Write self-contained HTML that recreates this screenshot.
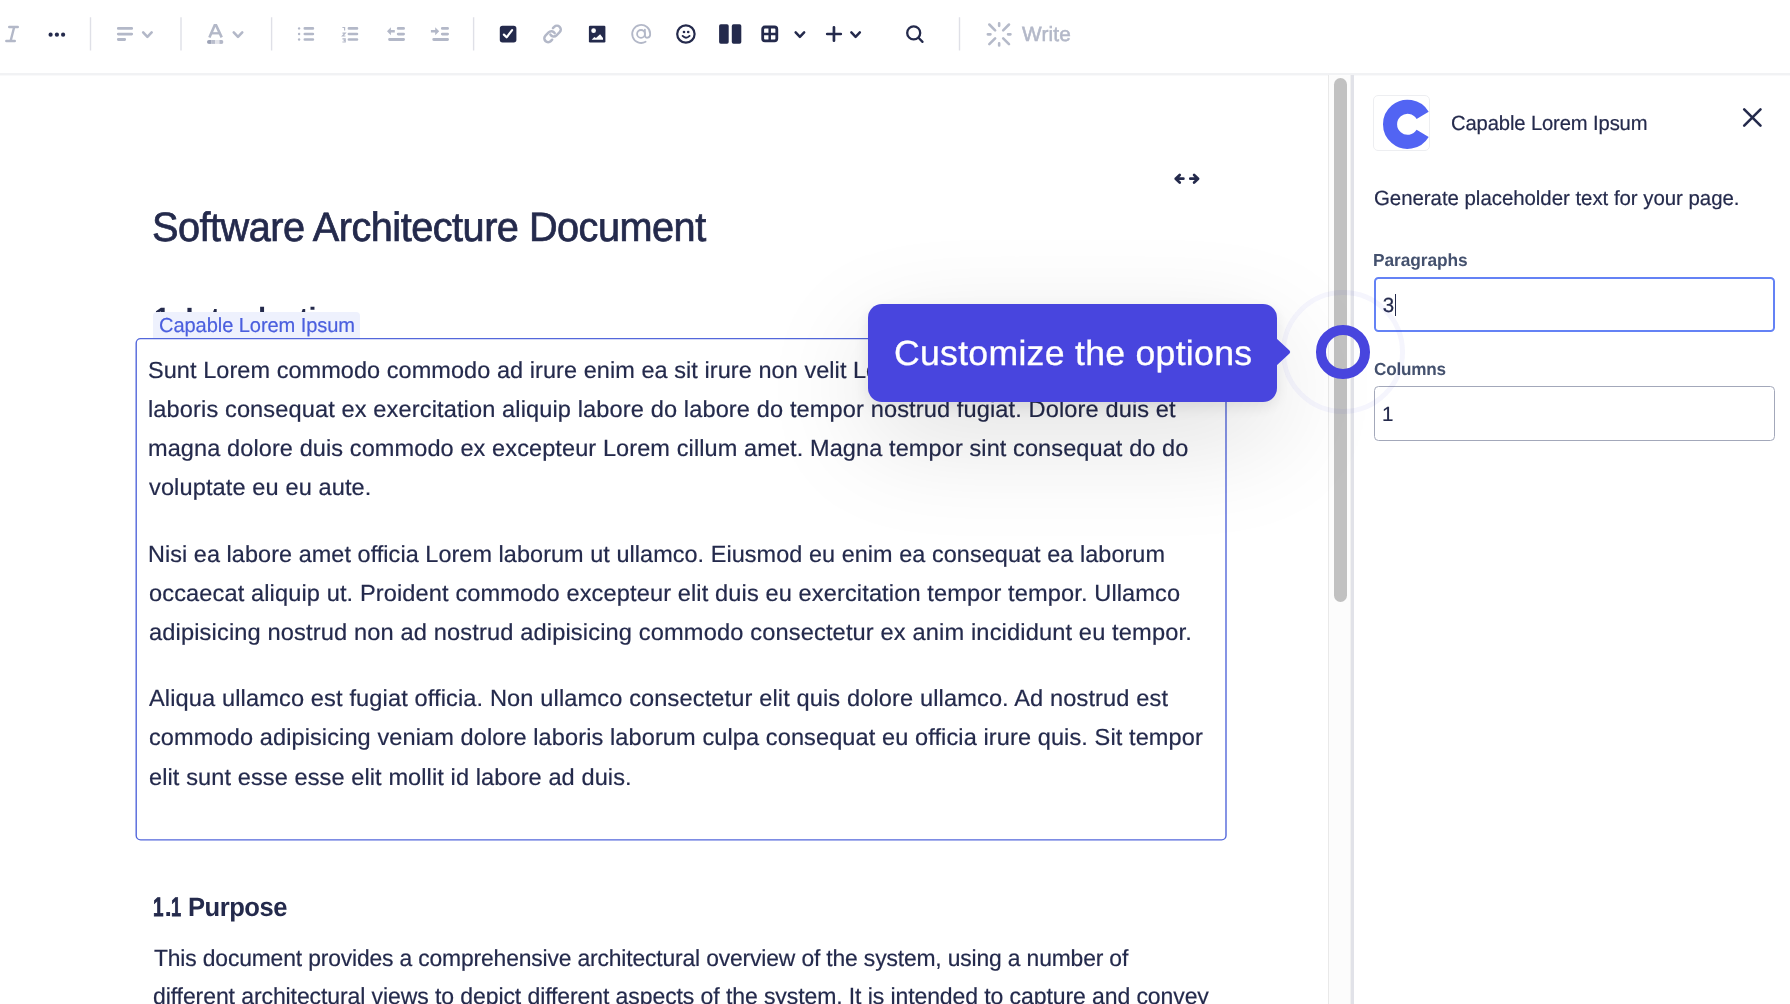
<!DOCTYPE html>
<html lang="en">
<head>
<meta charset="utf-8">
<title>Software Architecture Document</title>
<style>
*{box-sizing:border-box;margin:0;padding:0}
html,body{width:1790px;height:1004px;overflow:hidden;background:#fff}
body{position:relative;font-family:"Liberation Sans",sans-serif;color:#172b4d}
.t{position:absolute;white-space:nowrap;line-height:1;font-family:"Liberation Sans",sans-serif;text-rendering:geometricPrecision}
.abs{position:absolute}
svg{position:absolute;overflow:visible}
</style>
</head>
<body>
<div id="page" style="position:absolute;left:0;top:0;width:1790px;height:1004px;will-change:transform">
<div class="abs" style="left:0;top:73px;width:1790px;height:3px;background:linear-gradient(#f1f2f4 0,#f1f2f4 2px,#f9f9fa 2px,#f9f9fa 3px)"></div>
<svg style="left:0;top:0" width="1100" height="72" viewBox="0 0 1100 72"><path d="M90.5 17.3V50.6M181 17.3V50.6M271.6 17.3V50.6M473.6 17.3V50.6M959.5 17.3V50.6" stroke="#dfe0e7" stroke-width="1.4" fill="none"/></svg>
<svg style="left:0;top:0" width="1100" height="72" viewBox="0 0 1100 72">
<g stroke="#b3b8c8" stroke-width="2.4" stroke-linecap="round" fill="none"><path d="M9.2 27H17.8M6.3 41H14.8M14.2 27L10.6 41"/></g>
<circle cx="50.6" cy="34.7" r="2.1" fill="#242a4c"/>
<circle cx="56.9" cy="34.7" r="2.1" fill="#242a4c"/>
<circle cx="63.1" cy="34.7" r="2.1" fill="#242a4c"/>
<g stroke="#b3b8c8" stroke-width="2.8" stroke-linecap="round"><path d="M118.3 28.4H131.7M118.3 34.1H131.7M118.3 39.5H124.7"/></g>
<polyline points="143.15,32.4 147.40,36.8 151.65,32.4" fill="none" stroke="#b3b8c8" stroke-width="2.6" stroke-linecap="round" stroke-linejoin="round"/>
<g stroke="#b3b8c8" fill="none" stroke-linejoin="miter"><path d="M209.4 37.4L214.7 25.2H216.1L221.7 37.4" stroke-width="2.6"/><path d="M211.6 33.3H219.4" stroke-width="2.3"/></g>
<clipPath id="cb"><rect x="207" y="40" width="16.5" height="3.9" rx="1.95"/></clipPath>
<g clip-path="url(#cb)"><rect x="207" y="40" width="4.2" height="3.9" fill="#9ca2b6"/><rect x="211.2" y="40" width="4" height="3.9" fill="#b9bdcc"/><rect x="215.2" y="40" width="4.2" height="3.9" fill="#e3e4ea"/><rect x="219.4" y="40" width="4.1" height="3.9" fill="#b4b8c8"/></g>
<polyline points="233.75,32.4 238.00,36.8 242.25,32.4" fill="none" stroke="#b3b8c8" stroke-width="2.6" stroke-linecap="round" stroke-linejoin="round"/>
<g fill="#b3b8c8"><circle cx="299.1" cy="28.4" r="1.2"/><circle cx="299.1" cy="34.0" r="1.2"/><circle cx="299.1" cy="39.5" r="1.2"/></g>
<g stroke="#b3b8c8" stroke-width="2.6" stroke-linecap="round"><path d="M304.8 28.4H312.9M304.8 34H312.9M304.8 39.5H312.9"/></g>
<g stroke="#b3b8c8" stroke-width="2.6" stroke-linecap="round"><path d="M348.9 28.4H357M348.9 34H357M348.9 39.5H357"/></g>
<g stroke="#b3b8c8" stroke-width="1.2" fill="none"><path d="M342.4 27.5H344.6V30.6"/><path d="M342.5 33.2H345.2L342.5 36H345.4"/><path d="M342.4 38.9H345.2V42H342.4M343.6 40.4H345.2"/></g>
<g stroke="#b3b8c8" stroke-width="2.8" stroke-linecap="round"><path d="M398.2 28.4H403.6M398.2 34.1H403.6M389.5 39.5H403.6"/></g>
<path d="M387 31.2L390.9 27.2V30H394.8V32.4H390.9V35.2Z" fill="#b3b8c8"/>
<g stroke="#b3b8c8" stroke-width="2.8" stroke-linecap="round"><path d="M442.3 28.4H447.6M442.3 34.1H447.6M433.7 39.5H447.6"/></g>
<path d="M439.2 31.2L435.2 27.2V30H430.9V32.4H435.2V35.2Z" fill="#b3b8c8"/>
<rect x="499.8" y="25.8" width="16.6" height="16.6" rx="2.7" fill="#242a4c"/>
<polyline points="503.9,34.6 506.6,37.3 512.1,30.1" fill="none" stroke="#fff" stroke-width="2.2" stroke-linecap="round" stroke-linejoin="round"/>
<g transform="translate(552.55 33.9) rotate(-45)" fill="none" stroke="#b3b8c8" stroke-width="2.5" stroke-linecap="round"><path d="M4.4 -3.85L6.2 -3.85A3.85 3.85 0 0 1 6.2 3.85L1.7 3.85A3.85 3.85 0 0 1 -2.02 -1.00"/><path d="M4.4 -3.85L6.2 -3.85A3.85 3.85 0 0 1 6.2 3.85L1.7 3.85A3.85 3.85 0 0 1 -2.02 -1.00" transform="rotate(180)"/></g>
<rect x="588.9" y="25.8" width="16.5" height="16.6" rx="1.2" fill="#242a4c"/>
<circle cx="593.6" cy="30.7" r="2.35" fill="#fff"/>
<path d="M591.7 39.7L594.3 37L596 38L600.1 34.2L603 37.9V39.7Z" fill="#fff"/>
<g fill="none" stroke="#b3b8c8" stroke-width="1.8" stroke-linecap="round"><circle cx="641" cy="33.9" r="3.9"/><path d="M644.9 29.6V35.6C644.9 38.6 650.2 38.8 650.2 33.9A9 9 0 1 0 645.6 41.8"/></g>
<circle cx="685.9" cy="34" r="8.7" fill="none" stroke="#242a4c" stroke-width="2.2"/>
<circle cx="684" cy="32" r="1.3" fill="#242a4c"/><circle cx="688.2" cy="32" r="1.3" fill="#242a4c"/>
<path d="M682.6 35.9Q685.9 39.5 689.6 35.9" fill="none" stroke="#242a4c" stroke-width="1.9" stroke-linecap="round"/>
<rect x="719.1" y="24.2" width="9.6" height="19.6" rx="1.7" fill="#242a4c"/><rect x="731.8" y="24.2" width="9.5" height="19.6" rx="1.7" fill="#242a4c"/>
<rect x="762.7" y="27" width="14.1" height="13.9" rx="2.3" fill="none" stroke="#242a4c" stroke-width="2.8"/>
<path d="M769.7 27V41M762.7 34H776.8" stroke="#242a4c" stroke-width="2.5"/>
<polyline points="795.65,32.4 799.90,36.8 804.15,32.4" fill="none" stroke="#242a4c" stroke-width="2.5" stroke-linecap="round" stroke-linejoin="round"/>
<path d="M827.2 34H840.8M833.95 27.3V40.7" stroke="#242a4c" stroke-width="2.7" stroke-linecap="round"/>
<polyline points="851.35,32.4 855.60,36.8 859.85,32.4" fill="none" stroke="#242a4c" stroke-width="2.5" stroke-linecap="round" stroke-linejoin="round"/>
<circle cx="913.7" cy="32.9" r="6.5" fill="none" stroke="#242a4c" stroke-width="2.3"/><path d="M918.5 37.8L922.5 41.9" stroke="#242a4c" stroke-width="2.3" stroke-linecap="round"/>
<path d="M1008.05 34.35L1010.45 34.35M999.15 43.25L999.15 45.55M990.45 34.35L987.85 34.35M999.15 25.85L999.15 23.25M1003.18 38.38L1008.98 44.18M995.12 38.38L989.32 44.18M995.12 30.32L989.32 24.52M1003.18 30.32L1008.98 24.52" stroke="#b5bac9" stroke-width="2.6" stroke-linecap="round" fill="none"/>
</svg>
<div class="t" style="left:1022.21px;top:23px;line-height:23px;height:23px;font-size:20.5px;color:#b3b8c8;letter-spacing:0.140px;transform:scaleX(1.0146);transform-origin:0 0;-webkit-text-stroke:0.55px #b3b8c8;">Write</div>
<div class="abs" style="left:1328px;top:75px;width:23px;height:929px;background:#fcfcfc;border-left:1px solid #e9e9e9;border-right:1px solid #f1f1f1"></div>
<div class="abs" style="left:1351px;top:75px;width:3px;height:929px;background:#e1e2e8"></div>
<div class="abs" style="left:1334px;top:78px;width:13px;height:524px;border-radius:6.5px;background:#c1c1c1"></div>
<div class="t" style="left:152.30px;top:204px;line-height:46px;height:46px;font-size:41px;color:#242a4c;letter-spacing:-0.523px;transform:scaleX(0.9675);transform-origin:0 0;-webkit-text-stroke:0.7px #242a4c;">Software Architecture Document</div>
<div class="t" style="left:153.59px;top:302px;line-height:33px;height:33px;font-size:29.3px;color:#242a4c;letter-spacing:-0.199px;transform:scaleX(0.9827);transform-origin:0 0;font-weight:700;">1. Introduction</div>
<svg style="left:1160px;top:160px" width="60" height="40" viewBox="1160 160 60 40"><g fill="none" stroke="#242a4c" stroke-width="2.7" stroke-linecap="round" stroke-linejoin="round"><path d="M1183.4 178.7H1175.8M1179.7 174.9L1175.7 178.7L1179.7 182.5"/><path d="M1190.3 178.7H1197.9M1194.1 174.9L1198.1 178.7L1194.1 182.5"/></g></svg>
<svg style="left:0;top:330px" width="1240" height="520" viewBox="0 330 1240 520"><rect x="136.2" y="338.6" width="1089.8" height="501.25" rx="4.4" fill="#fff" stroke="#5367db" stroke-width="1.4"/></svg>
<div class="abs" style="left:153px;top:312px;width:207px;height:26px;background:#eef1fd;border-radius:4px 4px 0 0"></div>
<div class="t" style="left:158.68px;top:315px;line-height:22px;height:22px;font-size:20.3px;color:#4b5fde;letter-spacing:-0.086px;transform:scaleX(0.9903);transform-origin:0 0;-webkit-text-stroke:0.2px #4b5fde;">Capable Lorem Ipsum</div>
<div class="t" style="left:148.43px;top:357px;line-height:26px;height:26px;font-size:23.3px;color:#242a4c;letter-spacing:0.069px;transform:scaleX(1.0076);transform-origin:0 0;-webkit-text-stroke:0.2px #242a4c;">Sunt Lorem commodo commodo ad irure enim ea sit irure non velit L</div>
<div class="t" style="left:866.21px;top:357px;line-height:26px;height:26px;font-size:23.3px;color:#242a4c;letter-spacing:0.070px;transform:scaleX(1.0082);transform-origin:0 0;-webkit-text-stroke:0.2px #242a4c;">orem ullamco id elit deserunt in</div>
<div class="t" style="left:148.41px;top:396px;line-height:26px;height:26px;font-size:23.3px;color:#242a4c;letter-spacing:0.110px;transform:scaleX(1.0130);transform-origin:0 0;-webkit-text-stroke:0.2px #242a4c;">laboris consequat ex exercitation aliquip labore do labore do tempor nostrud fugiat. Dolore duis et</div>
<div class="t" style="left:148.44px;top:435px;line-height:26px;height:26px;font-size:23.3px;color:#242a4c;letter-spacing:0.093px;transform:scaleX(1.0100);transform-origin:0 0;-webkit-text-stroke:0.2px #242a4c;">magna dolore duis commodo ex excepteur Lorem cillum amet. Magna tempor sint consequat do do</div>
<div class="t" style="left:149.42px;top:474px;line-height:26px;height:26px;font-size:23.3px;color:#242a4c;letter-spacing:0.107px;transform:scaleX(1.0120);transform-origin:0 0;-webkit-text-stroke:0.2px #242a4c;">voluptate eu eu aute.</div>
<div class="t" style="left:148.08px;top:541px;line-height:26px;height:26px;font-size:23.3px;color:#242a4c;letter-spacing:0.055px;transform:scaleX(1.0061);transform-origin:0 0;-webkit-text-stroke:0.2px #242a4c;">Nisi ea labore amet officia Lorem laborum ut ullamco. Eiusmod eu enim ea consequat ea laborum</div>
<div class="t" style="left:149.01px;top:580px;line-height:26px;height:26px;font-size:23.3px;color:#242a4c;letter-spacing:0.112px;transform:scaleX(1.0128);transform-origin:0 0;-webkit-text-stroke:0.2px #242a4c;">occaecat aliquip ut. Proident commodo excepteur elit duis eu exercitation tempor tempor. Ullamco</div>
<div class="t" style="left:149.00px;top:619px;line-height:26px;height:26px;font-size:23.3px;color:#242a4c;letter-spacing:0.130px;transform:scaleX(1.0147);transform-origin:0 0;-webkit-text-stroke:0.2px #242a4c;">adipisicing nostrud non ad nostrud adipisicing commodo consectetur ex anim incididunt eu tempor.</div>
<div class="t" style="left:149.45px;top:685px;line-height:26px;height:26px;font-size:23.3px;color:#242a4c;letter-spacing:0.114px;transform:scaleX(1.0136);transform-origin:0 0;-webkit-text-stroke:0.2px #242a4c;">Aliqua ullamco est fugiat officia. Non ullamco consectetur elit quis dolore ullamco. Ad nostrud est</div>
<div class="t" style="left:149.00px;top:724px;line-height:26px;height:26px;font-size:23.3px;color:#242a4c;letter-spacing:0.096px;transform:scaleX(1.0110);transform-origin:0 0;-webkit-text-stroke:0.2px #242a4c;">commodo adipisicing veniam dolore laboris laborum culpa consequat eu officia irure quis. Sit tempor</div>
<div class="t" style="left:149.00px;top:764px;line-height:26px;height:26px;font-size:23.3px;color:#242a4c;letter-spacing:0.091px;transform:scaleX(1.0115);transform-origin:0 0;-webkit-text-stroke:0.2px #242a4c;">elit sunt esse esse elit mollit id labore ad duis.</div>
<h3 style="font-weight:inherit;font-size:inherit"><span class="t" style="left:153.31px;top:892px;line-height:30px;height:30px;font-size:26.6px;color:#242a4c;transform:scaleX(0.7109);transform-origin:0 0;font-weight:700;-webkit-text-stroke:0.8px #242a4c;">1</span><span class="t" style="left:164.49px;top:892px;line-height:30px;height:30px;font-size:26.6px;color:#242a4c;font-weight:700;">.</span><span class="t" style="left:170.65px;top:892px;line-height:30px;height:30px;font-size:26.6px;color:#242a4c;transform:scaleX(0.6867);transform-origin:0 0;font-weight:700;-webkit-text-stroke:0.8px #242a4c;">1</span><span class="t" style="left:187.89px;top:892px;line-height:30px;height:30px;font-size:26.6px;color:#242a4c;letter-spacing:-0.520px;transform:scaleX(0.9621);transform-origin:0 0;font-weight:700;"> Purpose</span></h3>
<div class="t" style="left:153.79px;top:945px;line-height:26px;height:26px;font-size:23.3px;color:#242a4c;letter-spacing:-0.160px;transform:scaleX(0.9816);transform-origin:0 0;-webkit-text-stroke:0.2px #242a4c;">This document provides a comprehensive architectural overview of the system, using a number of</div>
<div class="t" style="left:153.33px;top:983px;line-height:26px;height:26px;font-size:23.3px;color:#242a4c;letter-spacing:-0.097px;transform:scaleX(0.9880);transform-origin:0 0;-webkit-text-stroke:0.2px #242a4c;">different architectural views to depict different aspects of the system. It is intended to capture and convey</div>
<div class="abs" style="left:1373.4px;top:95px;width:56.3px;height:56px;border:1.4px solid #edeef1;border-radius:5px;background:#fff"></div>
<svg style="left:0;top:0" width="1790" height="170" viewBox="0 0 1790 170"><path d="M1422.64 115.26A17.55 17.55 0 1 0 1422.64 133.34" fill="none" stroke="#5264f3" stroke-width="14.1"/><path d="M1744.2 109.3L1760.5 125.6M1760.5 109.3L1744.2 125.6" stroke="#242a4c" stroke-width="2.6" stroke-linecap="round"/></svg>
<div class="t" style="left:1450.97px;top:112px;line-height:23px;height:23px;font-size:20.5px;color:#242a4c;letter-spacing:-0.127px;transform:scaleX(0.9858);transform-origin:0 0;-webkit-text-stroke:0.2px #242a4c;">Capable Lorem Ipsum</div>
<div class="t" style="left:1373.57px;top:187px;line-height:23px;height:23px;font-size:20.5px;color:#242a4c;letter-spacing:-0.030px;transform:scaleX(0.9961);transform-origin:0 0;-webkit-text-stroke:0.2px #242a4c;">Generate placeholder text for your page.</div>
<div class="t" style="left:1373.24px;top:250px;line-height:20px;height:20px;font-size:17.5px;color:#44516e;letter-spacing:-0.080px;transform:scaleX(0.9906);transform-origin:0 0;font-weight:700;">Paragraphs</div>
<div class="abs" style="left:1374px;top:277px;width:401px;height:55px;border:2.4px solid #6482f5;border-radius:4.5px;background:#fff"></div>
<div class="t" style="left:1382.82px;top:294px;line-height:23px;height:23px;font-size:20.5px;color:#242a4c;-webkit-text-stroke:0.2px #242a4c;">3</div>
<div class="abs" style="left:1394.8px;top:294px;width:1.4px;height:21.7px;background:#242a4c"></div>
<div class="t" style="left:1373.70px;top:359px;line-height:20px;height:20px;font-size:17.5px;color:#44516e;letter-spacing:-0.205px;transform:scaleX(0.9792);transform-origin:0 0;font-weight:700;">Columns</div>
<div class="abs" style="left:1374px;top:386px;width:401px;height:55px;border:1.4px solid #a3a8ba;border-radius:4.5px;background:#fff"></div>
<div class="t" style="left:1381.94px;top:403px;line-height:23px;height:23px;font-size:20.5px;color:#242a4c;-webkit-text-stroke:0.2px #242a4c;">1</div>
<div class="abs" style="left:868px;top:303.5px;width:408.6px;height:98.8px;border-radius:14px;background:#4845de;box-shadow:0 5px 16px rgba(0,0,0,.09),0 35px 110px rgba(0,0,0,.13)"></div>
<svg style="left:1270px;top:332px" width="24" height="40" viewBox="0 0 24 40"><path d="M6 6 L19.5 18.6 Q21 20 19.5 21.4 L6 34 Z" fill="#4845de"/></svg>
<div class="t" style="left:893.79px;top:334px;line-height:39px;height:39px;font-size:35px;color:#ffffff;letter-spacing:0.264px;transform:scaleX(1.0185);transform-origin:0 0;-webkit-text-stroke:0.3px #ffffff;">Customize the options</div>
<div class="abs" style="left:1280.8px;top:290px;width:124px;height:124px;border-radius:50%;border:5.5px solid rgba(71,67,220,.055)"></div>
<div class="abs" style="left:1316px;top:325.2px;width:53.6px;height:53.6px;border-radius:50%;border:10px solid #4845de"></div>
</div>
</body>
</html>
